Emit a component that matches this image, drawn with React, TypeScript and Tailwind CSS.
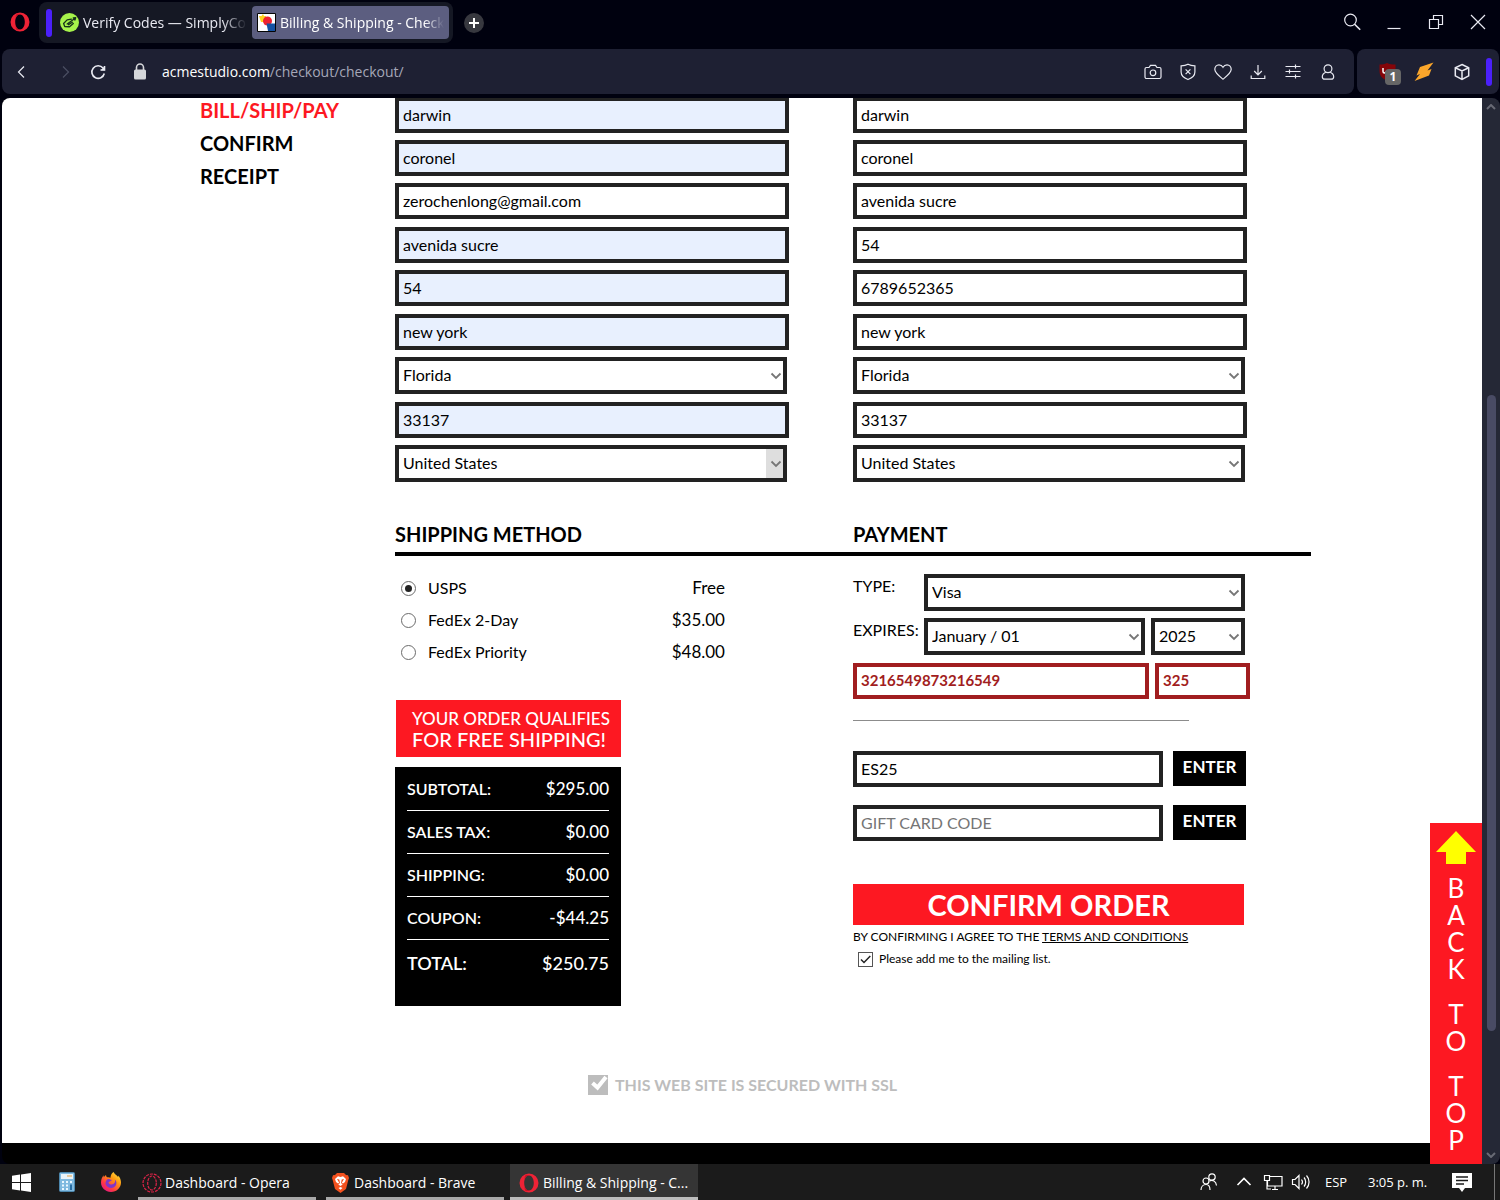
import React, { useState } from 'react';
import clsx from 'clsx';

interface FieldProps {
  label: string;
  value?: string;
  placeholder?: string;
  autofilled?: boolean;
  invalid?: boolean;
  className?: string;
}

const Field: React.FC<FieldProps> = ({ label, value = '', placeholder, autofilled = false, invalid = false, className }) => (
  <input
    type="text"
    aria-label={label}
    defaultValue={value}
    placeholder={placeholder}
    className={clsx(
      'block h-9 min-w-0 border-4 px-1 pb-[2px] outline-none placeholder:text-[#757575]',
      autofilled ? 'bg-[#e8f0fe]' : 'bg-white',
      invalid ? 'border-[#a11d20] text-[15px] font-bold text-[#a11d20]' : 'border-[#222] text-base text-black',
      className
    )}
  />
);

interface SelectProps {
  id?: string;
  label?: string;
  options: string[];
  hovered?: boolean;
  className?: string;
}

const Select: React.FC<SelectProps> = ({ id, label, options, hovered = false, className }) => (
  <div className={clsx('relative h-[37px] border-4 border-[#222] bg-white', className)}>
    <select id={id} aria-label={label} className="h-full w-full appearance-none bg-transparent px-1 pb-[2px] text-base text-black outline-none">
      {options.map((o) => (
        <option key={o}>{o}</option>
      ))}
    </select>
    <span
      className={clsx(
        'pointer-events-none absolute inset-y-0 right-0 flex w-[17px] items-center justify-end pr-px',
        hovered && 'bg-[#dedede]'
      )}
    >
      <svg width="12" height="8" viewBox="0 0 12 8" fill="none" stroke="#767676" strokeWidth="1.8">
        <path d="M1.5 1.5 6 6l4.500-4.500" />
      </svg>
    </span>
  </div>
);

interface AddressColumnProps {
  title: string;
  email?: string;
  phone?: string;
  autofilled?: boolean;
}

const AddressColumn: React.FC<AddressColumnProps> = ({ title, email, phone, autofilled = false }) => (
  <fieldset className="flex min-w-0 flex-col gap-2">
    <legend className="sr-only">{title}</legend>
    <div className="flex flex-col gap-[7px]">
      <Field label="First name" value="darwin" autofilled={autofilled} className="w-[394px] max-w-full" />
      <Field label="Last name" value="coronel" autofilled={autofilled} className="w-[394px] max-w-full" />
      <Field label={email ? 'Email' : 'Address'} value={email ?? 'avenida sucre'} className="w-[394px] max-w-full" />
    </div>
    <div className="flex flex-col gap-[7px]">
      <Field label={email ? 'Address' : 'Apartment'} value={email ? 'avenida sucre' : '54'} autofilled={autofilled} className="w-[394px] max-w-full" />
      <Field label={phone ? 'Phone' : 'Apartment'} value={phone ?? '54'} autofilled={autofilled} className="w-[394px] max-w-full" />
    </div>
    <div className="flex flex-col gap-[7px]">
      <Field label="City" value="new york" autofilled={autofilled} className="w-[394px] max-w-full" />
      <Select label="State" options={['Florida', 'New York']} className="w-[392px] max-w-full" />
    </div>
    <div className="flex flex-col gap-[7px]">
      <Field label="Zip code" value="33137" autofilled={autofilled} className="w-[394px] max-w-full" />
      <Select label="Country" options={['United States', 'Canada']} hovered={autofilled} className="w-[392px] max-w-full" />
    </div>
  </fieldset>
);

const SHIPPING = [
  { id: 'usps', name: 'USPS', price: 'Free' },
  { id: 'fedex2', name: 'FedEx 2-Day', price: '$35.00' },
  { id: 'fedexp', name: 'FedEx Priority', price: '$48.00' },
];

const TOTALS = [
  ['SUBTOTAL:', '$295.00'],
  ['SALES TAX:', '$0.00'],
  ['SHIPPING:', '$0.00'],
  ['COUPON:', '-$44.25'],
];

const ShippingMethod = () => {
  const [method, setMethod] = useState('usps');

  return (
    <div>
      <div className="mt-4 flex w-[330px] max-w-full flex-col">
        {SHIPPING.map((s) => (
          <label key={s.id} className="flex h-8 items-center pl-[6px] text-base">
            <input
              type="radio"
              name="shipping"
              checked={method === s.id}
              onChange={() => setMethod(s.id)}
              className="mr-3 flex size-[15px] appearance-none items-center justify-center rounded-full border border-[#6b6b6b] bg-white before:size-[7px] before:rounded-full checked:before:bg-[#222]"
            />
            <span className="flex-1">{s.name}</span>
            <span className="text-[17px]">{s.price}</span>
          </label>
        ))}
      </div>

      <div className="mt-8 ml-px flex h-[57px] w-[225px] flex-col justify-center bg-[#fd1822] pl-4 font-medium whitespace-nowrap text-white">
        <span className="text-[17px] leading-5">YOUR ORDER QUALIFIES</span>
        <span className="text-xl leading-5">FOR FREE SHIPPING!</span>
      </div>

      <div className="mt-[10px] w-[226px] bg-black px-3 pb-[19px] text-white">
        <table className="w-full border-collapse font-medium">
          <tbody>
            {TOTALS.map(([k, v]) => (
              <tr key={k} className="h-[43px] border-b border-white">
                <th className="pt-px text-left text-base font-semibold">{k}</th>
                <td className="pt-px text-right text-[17px]">{v}</td>
              </tr>
            ))}
            <tr className="h-12 text-lg">
              <th className="text-left font-semibold">TOTAL:</th>
              <td className="text-right">$250.75</td>
            </tr>
          </tbody>
        </table>
      </div>
    </div>
  );
};

const Payment = () => (
  <div>
    <div className="mt-[18px] flex w-[392px] max-w-full">
      <label htmlFor="card-type" className="w-[71px] text-base">TYPE:</label>
      <Select id="card-type" options={['Visa', 'Mastercard']} className="flex-1" />
    </div>
    <div className="mt-[7px] flex w-[392px] max-w-full">
      <label htmlFor="exp-month" className="w-[71px] text-base">EXPIRES:</label>
      <Select id="exp-month" options={['January / 01', 'February / 02']} className="mr-[6px] flex-1" />
      <Select label="Expiration year" options={['2025', '2026']} className="w-[94px]" />
    </div>
    <div className="mt-2 flex w-[397px] max-w-full gap-[6px]">
      <Field label="Card number" value="3216549873216549" invalid className="flex-1" />
      <Field label="Security code" value="325" invalid className="w-[95px]" />
    </div>
    <hr className="mt-[21px] w-[336px] border-[#8c8c8c]" />

    <div className="mt-[30px] flex w-[393px] max-w-full gap-[10px]">
      <Field label="Coupon code" value="ES25" className="flex-1" />
      <button type="button" className="h-[35px] w-[73px] bg-black pb-1 text-[17px] leading-6 font-bold text-white">ENTER</button>
    </div>
    <div className="mt-[18px] flex w-[393px] max-w-full gap-[10px]">
      <Field label="Gift card code" placeholder="GIFT CARD CODE" className="flex-1" />
      <button type="button" className="h-[35px] w-[73px] bg-black pb-1 text-[17px] leading-6 font-bold text-white">ENTER</button>
    </div>

    <button type="button" className="mt-[43px] block h-[41px] w-[391px] max-w-full bg-[#fd1822] text-[29px] leading-none font-bold text-white">
      CONFIRM ORDER
    </button>
    <p className="mt-1 text-xs leading-4">
      BY CONFIRMING I AGREE TO THE <a href="#terms" className="underline">TERMS AND CONDITIONS</a>
    </p>
    <label className="mt-[6px] ml-[5px] flex items-center gap-[6px] text-xs leading-4">
      <span className="relative flex size-[15px]">
        <input type="checkbox" defaultChecked className="peer size-[15px] appearance-none border border-[#555] bg-white" />
        <svg viewBox="0 0 15 15" className="pointer-events-none absolute inset-0 hidden peer-checked:block" fill="none" stroke="#222" strokeWidth="1.5">
          <path d="m3 7.500 3 3L12.300 4" />
        </svg>
      </span>
      Please add me to the mailing list.
    </label>
  </div>
);

const OperaLogo = ({ size = 20 }: { size?: number }) => (
  <svg width={size} height={size} viewBox="0 0 20 20">
    <path fillRule="evenodd" fill="#ee2336" d="M10 .5a9.500 9.500 0 1 0 0 19 9.500 9.500 0 0 0 0-19Zm0 2c2.700 0 4.800 3.300 4.800 7.500s-2.100 7.500-4.800 7.500S5.200 14.200 5.200 10 7.300 2.500 10 2.500Z" />
    <path fill="#a70014" d="M6.900 1.700c3 0 5 1.200 6.300 2.800-.9-1.200-2-2-3.200-2C8 2.500 6.500 4 5.700 6.200 5.400 4.500 5.800 2.800 6.900 1.700ZM6.900 18.300c3 0 5-1.200 6.300-2.800-.9 1.200-2 2-3.200 2-2 0-3.500-1.500-4.300-3.700-.3 1.700.1 3.400 1.200 4.500Z" opacity=".5" />
  </svg>
);

const Svg: React.FC<React.SVGProps<SVGSVGElement>> = ({ children, ...rest }) => (
  <svg width="20" height="20" viewBox="0 0 20 20" fill="none" stroke="currentColor" strokeWidth="1.200" {...rest}>
    {children}
  </svg>
);

const WINDOW_BUTTONS = [
  { label: 'Search tabs', icon: <Svg><circle cx="8.500" cy="8" r="5.800" /><path d="m12.600 12.200 5.600 5.600" strokeWidth="1.600" /></Svg> },
  { label: 'Minimize', icon: <Svg><path d="M3.500 16.500h13" /></Svg> },
  { label: 'Restore', icon: <Svg><path d="M3.500 7.500h9v9h-9zM7.500 7.500v-4h9v9h-4" /></Svg> },
  { label: 'Close', icon: <Svg><path d="m3 3 14 14M17 3 3 17" /></Svg> },
];

const TOOLBAR_BUTTONS = [
  { label: 'Snapshot', icon: <Svg><path d="M3.500 5.500H6l1.500-2.200h5L14 5.500h2.500c.8 0 1.500.7 1.500 1.500v8c0 .8-.7 1.500-1.500 1.500h-13c-.8 0-1.500-.7-1.500-1.500V7c0-.8.700-1.500 1.500-1.500Z" /><circle cx="10" cy="10.800" r="2.800" /></Svg> },
  { label: 'Blocker', icon: <Svg><path d="M10 2.300c2.300 1.300 4.300 1.500 6.900 1.500V10c0 4-2.900 6-6.900 7.500-4-1.500-6.900-3.500-6.900-7.500V3.800C5.700 3.800 7.700 3.600 10 2.300Z" /><path d="m7.600 7.400 4.800 4.800m0-4.800-4.800 4.800" /></Svg> },
  { label: 'Bookmark', icon: <Svg><path d="M10 17.200C6 14 1.800 10.900 1.800 7.300c0-2.500 1.800-4.500 4.200-4.500 1.700 0 3.100.9 4 2.500.9-1.600 2.300-2.500 4-2.500 2.400 0 4.200 2 4.200 4.500 0 3.600-4.200 6.700-8.200 9.900Z" /></Svg> },
  { label: 'Downloads', icon: <Svg><path d="M10 3v9.500M6.200 9l3.800 3.800L13.800 9M3.200 13.500v3h13.600v-3" /></Svg> },
  { label: 'Easy setup', icon: <Svg><path d="M2.500 4.500h15M2.500 9.500h15M2.500 14.500h15M12.500 2.500v4M6.500 7.500v4M12.500 12.500v4" /></Svg> },
  { label: 'Profile', icon: <Svg><circle cx="10" cy="6.700" r="3.900" /><path d="M7.800 10.200c-2.200.9-3.500 2.600-3.500 4.500 0 1.600 1 2.500 2.500 2.500h6.400c1.500 0 2.500-.9 2.500-2.500 0-1.900-1.300-3.600-3.500-4.500" /></Svg> },
];

const BrowserHeader = () => (
  <header className="shrink-0 font-['Open_Sans','Noto_Sans',sans-serif] text-[#e9eaf2]">
    <div className="flex h-[49px] items-start">
      <button type="button" aria-label="Opera menu" className="mt-3 ml-[10px] mr-[9px]">
        <OperaLogo />
      </button>
      <div className="mt-[2px] flex h-[41px] min-w-0 items-center rounded-lg bg-[#151824] pr-1 pl-[7px] text-sm">
        <span className="mr-2 h-7 w-[6px] rounded-full bg-[#4b20fb]" />
        <button type="button" className="flex h-[33px] w-[187px] min-w-0 items-center gap-1 text-left">
          <svg width="19" height="19" viewBox="0 0 20 20" className="shrink-0">
            <circle cx="10" cy="10" r="10" fill="#a6f34b" />
            <g fill="none" stroke="#16331b" strokeWidth="1.400" strokeLinejoin="round" strokeLinecap="round">
              <path d="M12 6.500 7.500 7.200 3.800 11l1.200 3.300 5 .2 4-3.500" />
              <path d="m7.500 11.500 8.500-6M9 12.300l4-2.500M14 5.300l2.500-.3-.8 2.500" />
            </g>
          </svg>
          <span className="overflow-hidden whitespace-nowrap [mask-image:linear-gradient(to_right,black_85%,transparent)]">
            Verify Codes — SimplyCodes
          </span>
        </button>
        <button type="button" className="ml-[5px] flex h-[33px] w-[197px] min-w-0 items-center gap-1 rounded bg-[#5c5e80] px-[5px] text-left text-white">
          <svg width="19" height="19" viewBox="0 0 19 19" className="shrink-0">
            <path d="M.5.5h18v18H.5z" fill="#fff" stroke="#050505" />
            <path d="m6 1 2 4h-5Z M2 3h7v6H4Z" fill="#ffd21f" />
            <circle cx="10.500" cy="8" r="4.500" fill="#ee2230" />
            <path d="M9.500 10.500H18V18H11Z" fill="#1552a2" />
          </svg>
          <span className="overflow-hidden whitespace-nowrap [mask-image:linear-gradient(to_right,black_88%,transparent)]">
            Billing &amp; Shipping - Checkout
          </span>
        </button>
      </div>
      <button type="button" aria-label="New tab" className="mt-[13px] ml-[11px] flex size-5 items-center justify-center rounded-full bg-[#37383f]">
        <svg width="10" height="10" viewBox="0 0 10 10" stroke="#fff" strokeWidth="2"><path d="M5 0v10M0 5h10" /></svg>
      </button>
      <div className="mr-px ml-auto flex">
        {WINDOW_BUTTONS.map((b) => (
          <button key={b.label} type="button" aria-label={b.label} className="flex h-11 w-[42px] items-center justify-center">
            {b.icon}
          </button>
        ))}
      </div>
    </div>

    <div className="flex h-[45px] gap-[3px] pr-px pl-[2px]">
      <div className="flex min-w-0 flex-1 items-center rounded-lg bg-[#1e2033] pr-[9px] pl-[10px]">
        <button type="button" aria-label="Back" className="mr-[23px]">
          <Svg><path d="m12 4.500-5.500 5.500 5.500 5.500" /></Svg>
        </button>
        <button type="button" aria-label="Forward" className="mr-[13px] text-[#4b4e62]">
          <Svg><path d="m8 4.500 5.500 5.500L8 15.500" /></Svg>
        </button>
        <button type="button" aria-label="Reload" className="mr-[22px]">
          <Svg strokeWidth="1.600"><path d="M16.300 11.500A6.300 6.300 0 1 1 15 6l1.200 1.400" /><path d="M17 4v4.200h-4.200" fill="currentColor" stroke="none" /><path d="M16.500 4v4h-4" /></Svg>
        </button>
        <svg width="20" height="20" viewBox="0 0 20 20" className="mr-3">
          <rect x="4" y="7.500" width="12" height="10" rx="1.500" fill="#d5d6da" />
          <path d="M6.500 8V5.500a3.500 3.500 0 0 1 7 0V8" fill="none" stroke="#d5d6da" strokeWidth="1.600" />
        </svg>
        <p className="text-sm text-white">
          acmestudio.com<span className="text-[#a5a7b8]">/checkout/checkout/</span>
        </p>
        <div className="ml-auto flex">
          {TOOLBAR_BUTTONS.map((b) => (
            <button key={b.label} type="button" aria-label={b.label} className="flex h-9 w-[35px] items-center justify-center">
              {b.icon}
            </button>
          ))}
        </div>
      </div>
      <div className="flex items-center rounded-lg bg-[#1e2033] pr-[7px] pl-[14px]">
        <button type="button" aria-label="Ad blocker" className="relative flex h-9 w-[35px] items-center justify-center">
          <svg width="20" height="20" viewBox="0 0 20 20">
            <path d="M8 1c2.500 1.300 5 1.500 8.500 1.500V9c0 5-4 7.500-8.500 9.500C3.500 16.500.5 14 .5 9V2.500C3.500 2.500 5.500 2.300 8 1Z" fill="#850509" />
            <path d="M4 6v3.500c0 2 3 2 3 0" fill="none" stroke="#fff" strokeWidth="1.500" />
          </svg>
          <span className="absolute top-[15px] left-[14px] flex size-4 items-center justify-center rounded bg-[#666] text-xs font-bold text-white">1</span>
        </button>
        <button type="button" aria-label="Lightning" className="flex h-9 w-[35px] items-center justify-center">
          <svg width="20" height="20" viewBox="0 0 20 20"><path d="M19.500.500 6 5 2.500 13.500 6 12 .5 19 15 13.500 17.500 7 13.500 8.500Z" fill="#fba62b" /></svg>
        </button>
        <button type="button" aria-label="Extensions" className="ml-[3px] flex h-9 w-[35px] items-center justify-center">
          <Svg strokeWidth="1.500"><path d="m10 2.500 6.700 3.300v8L10 17.500l-6.700-3.700v-8ZM3.300 5.800 10 9l6.700-3.200M10 9v8.500" /></Svg>
        </button>
        <span className="ml-[7px] h-7 w-[6px] rounded-full bg-[#4b20fb]" />
      </div>
    </div>
  </header>
);

const CheckoutPage = () => (
  <main className="min-h-0 flex-1 overflow-hidden rounded-tl-lg rounded-bl-lg bg-black font-[Lato,sans-serif] text-black">
    <div className="-mt-px flex bg-white pb-[46px] pl-[198px]">
      <nav className="w-[195px] shrink-0 text-xl leading-[33px] font-bold">
        <a href="#pay" className="-mt-[3px] block text-[#fd1822]">BILL/SHIP/PAY</a>
        <a href="#confirm" className="block">CONFIRM</a>
        <a href="#receipt" className="block">RECEIPT</a>
      </nav>
      <form className="max-w-[916px] min-w-0 flex-1">
        <div className="grid grid-cols-2">
          <AddressColumn title="Billing address" email="zerochenlong@gmail.com" autofilled />
          <AddressColumn title="Shipping address" phone="6789652365" />
        </div>
        <div className="mt-9 grid grid-cols-2 border-b-4 border-black pb-[2px] text-xl leading-8 font-bold">
          <h2>SHIPPING METHOD</h2>
          <h2>PAYMENT</h2>
        </div>
        <div className="grid grid-cols-2">
          <ShippingMethod />
          <Payment />
        </div>
        <p className="mt-[67px] ml-[193px] flex items-center gap-[7px] text-base leading-6 font-bold text-[#bdbdbd]">
          <svg width="20" height="20" viewBox="0 0 20 20">
            <path d="M0 0h20v20H0z" fill="#bdbdbd" />
            <path d="m4.500 8 5 4.500L18 2" fill="none" stroke="#fff" strokeWidth="4" />
          </svg>
          THIS WEB SITE IS SECURED WITH SSL
        </p>
      </form>
    </div>
  </main>
);

const BackToTop = () => (
  <a href="#top" aria-label="Back to top" className="absolute right-[18px] bottom-0 flex h-[341px] w-[52px] flex-col items-center bg-[#fd1822] pt-2 font-[Lato,sans-serif] text-[26px] leading-[27px] text-white">
    <svg width="40" height="33" viewBox="0 0 40 33" className="mb-[11px] shrink-0"><path d="M20 0 40 21H30v12H10V21H0Z" fill="#ff0" /></svg>
    <span>B</span>
    <span>A</span>
    <span>C</span>
    <span className="mb-[18px]">K</span>
    <span>T</span>
    <span className="mb-[18px]">O</span>
    <span>T</span>
    <span>O</span>
    <span>P</span>
  </a>
);

const Scrollbar = () => (
  <div className="flex w-[18px] shrink-0 flex-col items-center rounded-r-lg bg-[#252836] py-[6px] text-[#686a75]">
    <svg width="10" height="6" viewBox="0 0 10 6" fill="none" stroke="currentColor" strokeWidth="2"><path d="m1 5 4-4 4 4" /></svg>
    <div className="flex min-h-0 w-full flex-1 flex-col items-center">
      <div className="h-[285px]" />
      <div className="w-[9px] basis-[61%] rounded-full bg-[#494b64]" />
    </div>
    <svg width="10" height="6" viewBox="0 0 10 6" fill="none" stroke="currentColor" strokeWidth="2"><path d="m1 1 4 4 4-4" /></svg>
  </div>
);

const Taskbar = () => (
  <footer className="flex h-9 shrink-0 items-center bg-[#1b1b1b] font-['Open_Sans','Noto_Sans',sans-serif] text-sm text-white">
    <button type="button" aria-label="Start" className="ml-[12px] mr-[28px]">
      <svg width="19" height="19" viewBox="0 0 19 19" fill="#fff"><path d="m0 2.800 8-1.200v7.400H0ZM9 1.400 19 0v9H9ZM0 10h8v7.400l-8-1.200ZM9 10h10v9L9 17.600Z" /></svg>
    </button>
    <button type="button" aria-label="Calculator" className="mr-[26px]">
      <svg width="16" height="20" viewBox="0 0 16 20">
        <rect x=".5" y=".5" width="15" height="19" rx="1" fill="#7fb9df" stroke="#4c87ad" />
        <path d="M2 2h12v5H2z" fill="#e9f3f8" /><path d="M8 3.500h5v1H8z" fill="#e3a047" />
        <path d="M3 9h2v2H3zM7 9h2v2H7zM11 9h2v2h-2zM3 12.500h2v2H3zM7 12.500h2v2H7zM3 16h2v2H3zM7 16h2v2H7z" fill="#eaf7ff" /><path d="M11 12.500h2V18h-2z" fill="#276da3" />
      </svg>
    </button>
    <button type="button" aria-label="Firefox" className="mr-[17px]">
      <svg width="20" height="20" viewBox="0 0 20 20">
        <defs>
          <linearGradient id="fox" x1="1" y1="0" x2=".2" y2="1"><stop offset="0" stopColor="#fff44f" /><stop offset=".4" stopColor="#ff980e" /><stop offset=".75" stopColor="#ff3647" /><stop offset="1" stopColor="#e31587" /></linearGradient>
        </defs>
        <path d="M12.500 0c1 2.500 3.500 3.200 4.600 5 .2-.5.200-1 .1-1.500C19 5.500 20 8 20 10.500 20 15.800 15.500 20 10 20S0 15.700 0 10.500C0 7.500 1.300 5 2.500 3.300l.3 2C3.400 4.200 4.200 3.500 5 3c0 1 .3 1.700 1 2.300 1.500-.3 2.500 0 3.500.5C9.500 3.300 10.800 1 12.500 0Z" fill="url(#fox)" />
        <path d="M6.500 7.200c2-.4 2.500.6 4.400.8-.6 1.400-2.700 1.300-3.500 2.500 1 2.700 4.800 2.600 6.200.3.600-1 .6-2 .1-3.200 2 1.400 2.400 4.500.7 6.500-2.500 3-8.100 2.300-9.600-1.300-.9-2 .2-4.500 1.700-5.600Z" fill="#8135c9" />
      </svg>
    </button>
    <button type="button" className="mr-[10px] flex h-full w-[178px] items-center gap-[3px] border-b-3 border-[#a9a9a9] pt-[4px] pl-1 text-left whitespace-nowrap">
      <svg width="20" height="20" viewBox="0 0 20 20" fill="none" stroke="#dd2448" strokeWidth="1.200" strokeDasharray="3 1" className="shrink-0"><circle cx="10" cy="10" r="9" /><ellipse cx="10" cy="10" rx="4.300" ry="7" /></svg>
      Dashboard - Opera
    </button>
    <button type="button" className="mr-[6px] flex h-full w-[178px] items-center gap-[5px] border-b-3 border-[#a9a9a9] pt-[4px] pl-[6px] text-left whitespace-nowrap">
      <svg width="17" height="20" viewBox="0 0 17 20" className="shrink-0">
        <path d="m5 0-2 2-2 .2L0 5l.7 2L3 16l5.500 4 5.500-4 2.300-9 .7-2-1-2.800-2-.2-2-2Z" fill="#f4511e" />
        <path d="m8.500 4 2.500-.7L14 6l-1 3-2 1.500-1.200-.7L12 6l-2.300.6L9 10l1.700 1.500L8.500 13l-2.200-1.500L8 10l-.7-3.400L5 6l2.200 3.800-1.200.7L4 9 3 6l3-2.700ZM8.500 14l2 1-2 1.700-2-1.700Z" fill="#fff" />
      </svg>
      Dashboard - Brave
    </button>
    <button type="button" className="flex h-full w-[188px] items-center gap-1 border-b-3 border-[#bdbdbd] bg-[#353535] pt-[4px] pl-[9px] text-left whitespace-nowrap">
      <OperaLogo />
      Billing &amp; Shipping - C...
    </button>
    <div className="ml-auto flex h-full items-center">
      <Svg className="mr-[15px]"><circle cx="13" cy="5" r="3.200" /><circle cx="7" cy="9" r="3" /><path d="M2 18c0-3 2-5.500 5-5.500s4 2 4 5.500M10.500 9c3-1.500 6.500 0 7 4.500" /></Svg>
      <Svg className="mr-[9px]"><path d="m3.500 13 6.500-6.500 6.500 6.500" strokeWidth="1.600" /></Svg>
      <Svg className="mr-[8px]"><path d="M6 4.500h13v9.500H4.500V9M9 17.500h6M12 14v3.500M1.500 3.500h5v5h-5zM4 8.500V17h4" /></Svg>
      <Svg className="mr-[14px]"><path d="M1.500 7.500H4l4-4v13l-4-4H1.500ZM10.500 7.500c1.200 1.500 1.200 3.500 0 5M13 5.500c2.200 2.500 2.200 6.500 0 9M15.500 3.500c3.400 3.700 3.400 9.300 0 13" /></Svg>
      <span className="w-[24px] text-[13px]">ESP</span>
      <span className="ml-[19px] w-[62px] text-[13px] whitespace-nowrap">3:05 p. m.</span>
      <svg width="20" height="19" viewBox="0 0 20 19" className="ml-[22px]"><path d="M0 0h20v15h-7l-3 4-3-4H0Z" fill="#fff" /><path d="M4 4h12M4 7.500h12M4 11h8" stroke="#1b1b1b" strokeWidth="1.300" /></svg>
      <span className="mr-[5px] ml-[22px] h-full w-px bg-[#777]" />
    </div>
  </footer>
);

const App: React.FC = () => (
  <div className="flex h-screen flex-col bg-[#00010f]">
    <BrowserHeader />
    <div className="relative mt-1 flex min-h-0 flex-1 pl-[2px]">
      <CheckoutPage />
      <BackToTop />
      <Scrollbar />
    </div>
    <Taskbar />
  </div>
);

export default App;
